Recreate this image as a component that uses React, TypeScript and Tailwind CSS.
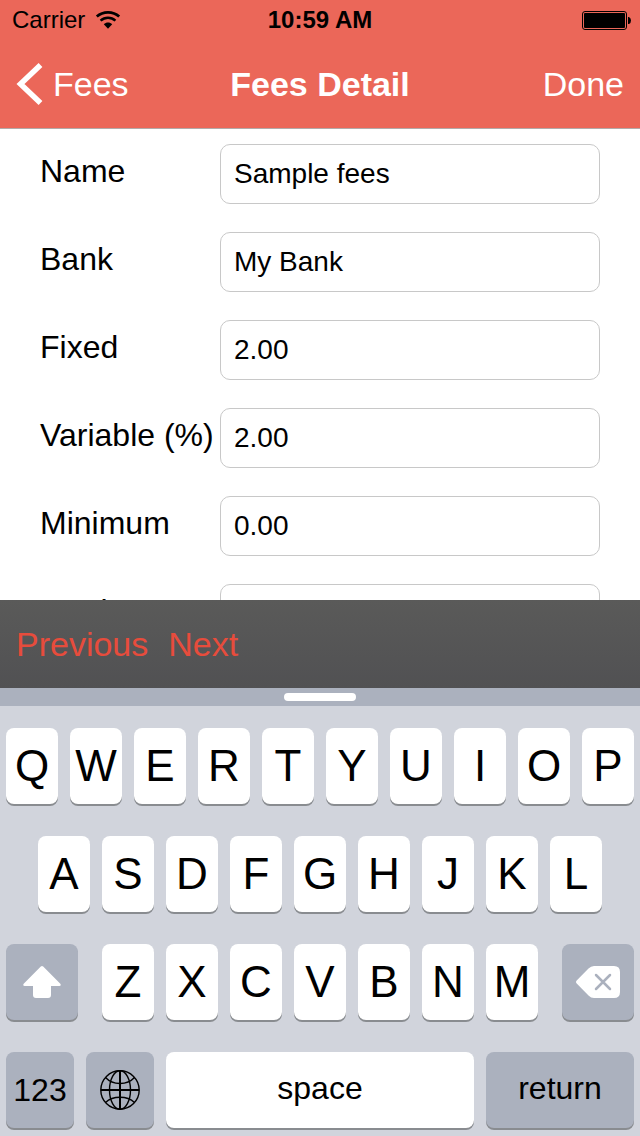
import { useState } from "react";
import type { ReactNode } from "react";

const fields = [
  { id: "name", label: "Name", value: "Sample fees" },
  { id: "bank", label: "Bank", value: "My Bank" },
  { id: "fixed", label: "Fixed", value: "2.00" },
  { id: "variable", label: "Variable (%)", value: "2.00" },
  { id: "minimum", label: "Minimum", value: "0.00" },
  { id: "maximum", label: "Maximum", value: "" },
];

function WifiIcon() {
  return (
    <svg viewBox="0 0 26 20" className="h-5 w-6.5" fill="none" aria-hidden="true">
      <path d="M1.8 6.6C8 .9 18 .9 24.2 6.6" stroke="#000" strokeWidth="2.7" />
      <path d="M5.6 10.6c4.2-3.9 10.6-3.9 14.8 0" stroke="#000" strokeWidth="2.5" />
      <path d="M8.8 14.2c2.4-2.3 6-2.3 8.4 0L13 18.8z" fill="#000" />
    </svg>
  );
}

function BatteryIcon() {
  return (
    <svg viewBox="0 0 50 20" className="h-5 w-12.5" aria-hidden="true">
      <rect x="0.5" y="1.5" width="44" height="18" rx="2.5" fill="none" stroke="#000" />
      <rect x="2" y="3" width="41" height="15" rx="1" fill="#000" />
      <path d="M46 7h1q2 1 2 3.500t-2 3.500h-1z" fill="#000" />
    </svg>
  );
}

function ShiftIcon() {
  return (
    <svg viewBox="0 0 38 32" className="h-8 w-9.5" aria-hidden="true">
      <path
        d="M17.800.6q1.200-1 2.400 0L37.300 17.800q1.200 1.900-1 2.200H28v9q0 3-3 3H13q-3 0-3-3V20H1.700q-2.200-.3-1-2.200z"
        fill="#fff"
      />
    </svg>
  );
}

function BackspaceIcon() {
  return (
    <svg viewBox="0 0 44 32" className="h-8 w-11" aria-hidden="true">
      <path
        d="M.7 14.500 12.500 2.600Q15 0 18 0h20q6 0 6 6v20q0 6-6 6H18q-3 0-5.500-2.600L.7 17.500q-1.400-1.500 0-3z"
        fill="#fff"
      />
      <path d="m20 9 14 14m0-14L20 23" stroke="#abb1be" strokeWidth="2.500" strokeLinecap="round" />
    </svg>
  );
}

function GlobeIcon() {
  return (
    <svg viewBox="0 0 40 40" className="size-10" fill="none" stroke="#000" aria-hidden="true">
      <g strokeWidth="1.400">
        <circle cx="20" cy="20" r="19.200" />
        <ellipse cx="20" cy="20" rx="10.500" ry="19.200" />
        <path d="M5.500 7.500c7.500 8 21.500 8 29 0M5.500 32.500c7.500-7 21.500-7 29 0" />
      </g>
      <path d="M20 1v38M1 20h38" strokeWidth="2" />
    </svg>
  );
}

const keyBase = "flex h-19 min-w-0 items-center justify-center rounded-lg text-black shadow-[0_2px_0_#898c90]";

function LetterKeys({ letters }: { letters: string }) {
  return (
    <>
      {letters.split("").map((letter) => (
        <button key={letter} type="button" className={`${keyBase} flex-1 bg-white text-[44px] leading-none`}>
          {letter}
        </button>
      ))}
    </>
  );
}

function ActionKey({ label, className, children }: { label: string; className: string; children: ReactNode }) {
  return (
    <button type="button" aria-label={label} className={`${keyBase} text-[32px] leading-none ${className}`}>
      {children}
    </button>
  );
}

function Keyboard() {
  return (
    <section aria-label="Keyboard" className="shrink-0 bg-[#d1d4dc]">
      <div className="flex h-4.5 items-center justify-center bg-[#abb1be]">
        <div className="h-2 w-18 rounded-full bg-white" />
      </div>
      <div className="flex flex-col gap-8 px-1.5 pt-5.5 pb-2">
        <div className="flex gap-3">
          <LetterKeys letters="QWERTYUIOP" />
        </div>
        <div className="flex gap-3 px-8">
          <LetterKeys letters="ASDFGHJKL" />
        </div>
        <div className="grid grid-cols-[72fr_436fr_72fr] gap-6">
          <ActionKey label="Shift" className="bg-[#abb1be]">
            <ShiftIcon />
          </ActionKey>
          <div className="flex gap-3">
            <LetterKeys letters="ZXCVBNM" />
          </div>
          <ActionKey label="Delete" className="bg-[#abb1be]">
            <BackspaceIcon />
          </ActionKey>
        </div>
        <div className="grid grid-cols-[68fr_68fr_308fr_148fr] gap-3">
          <ActionKey label="123" className="bg-[#abb1be]">
            123
          </ActionKey>
          <ActionKey label="Next keyboard" className="bg-[#abb1be]">
            <GlobeIcon />
          </ActionKey>
          <ActionKey label="space" className="bg-white pb-1">
            space
          </ActionKey>
          <ActionKey label="return" className="bg-[#abb1be] pb-1">
            return
          </ActionKey>
        </div>
      </div>
    </section>
  );
}

export default function App() {
  const [values, setValues] = useState<Record<string, string>>(
    Object.fromEntries(fields.map((field) => [field.id, field.value])),
  );

  return (
    <div className="flex h-screen flex-col overflow-hidden bg-white font-['Liberation_Sans',Arial,sans-serif] text-black">
      <header className="shrink-0 border-b border-[#b2aaa9] bg-[#eb6759]">
        <div className="grid h-10 grid-cols-[1fr_auto_1fr] items-center px-3 text-2xl leading-none">
          <div className="flex items-center gap-2.5">
            <span>Carrier</span>
            <WifiIcon />
          </div>
          <span className="font-bold">10:59 AM</span>
          <div className="-mr-1 flex justify-end">
            <BatteryIcon />
          </div>
        </div>
        <nav className="grid h-22 grid-cols-[1fr_auto_1fr] items-center px-4 text-[34px] leading-none text-white">
          <a href="#fees" className="flex items-center gap-2.5 justify-self-start">
            <svg viewBox="0 0 27 42" className="h-10.5 w-6.75" fill="none" aria-hidden="true">
              <path d="M24.500 2 4.500 21l20 19" stroke="#fff" strokeWidth="5.500" />
            </svg>
            Fees
          </a>
          <h1 className="font-bold">Fees Detail</h1>
          <button type="button" className="justify-self-end">
            Done
          </button>
        </nav>
      </header>

      <main className="min-h-0 flex-1 overflow-hidden">
        <form className="flex flex-col gap-7 px-10 pt-[15px]">
          {fields.map((field) => (
            <div key={field.id} className="flex h-15 items-start">
              <label htmlFor={field.id} className="w-45 shrink-0 text-[32px] leading-[54px] whitespace-nowrap">
                {field.label}
              </label>
              <input
                id={field.id}
                type="text"
                value={values[field.id]}
                onChange={(event) => setValues({ ...values, [field.id]: event.target.value })}
                className="h-15 min-w-0 flex-1 rounded-[10px] border border-[#c8c8c8] bg-white px-[13px] text-[28px] outline-none"
              />
            </div>
          ))}
        </form>
      </main>

      <div
        role="toolbar"
        aria-label="Field navigation"
        className="flex h-22 shrink-0 items-center gap-5 bg-linear-to-b from-[#5a5a59] to-[#515153] px-4 text-[34px] leading-none text-[#e74c3c]"
      >
        <button type="button">Previous</button>
        <button type="button">Next</button>
      </div>

      <Keyboard />
    </div>
  );
}
